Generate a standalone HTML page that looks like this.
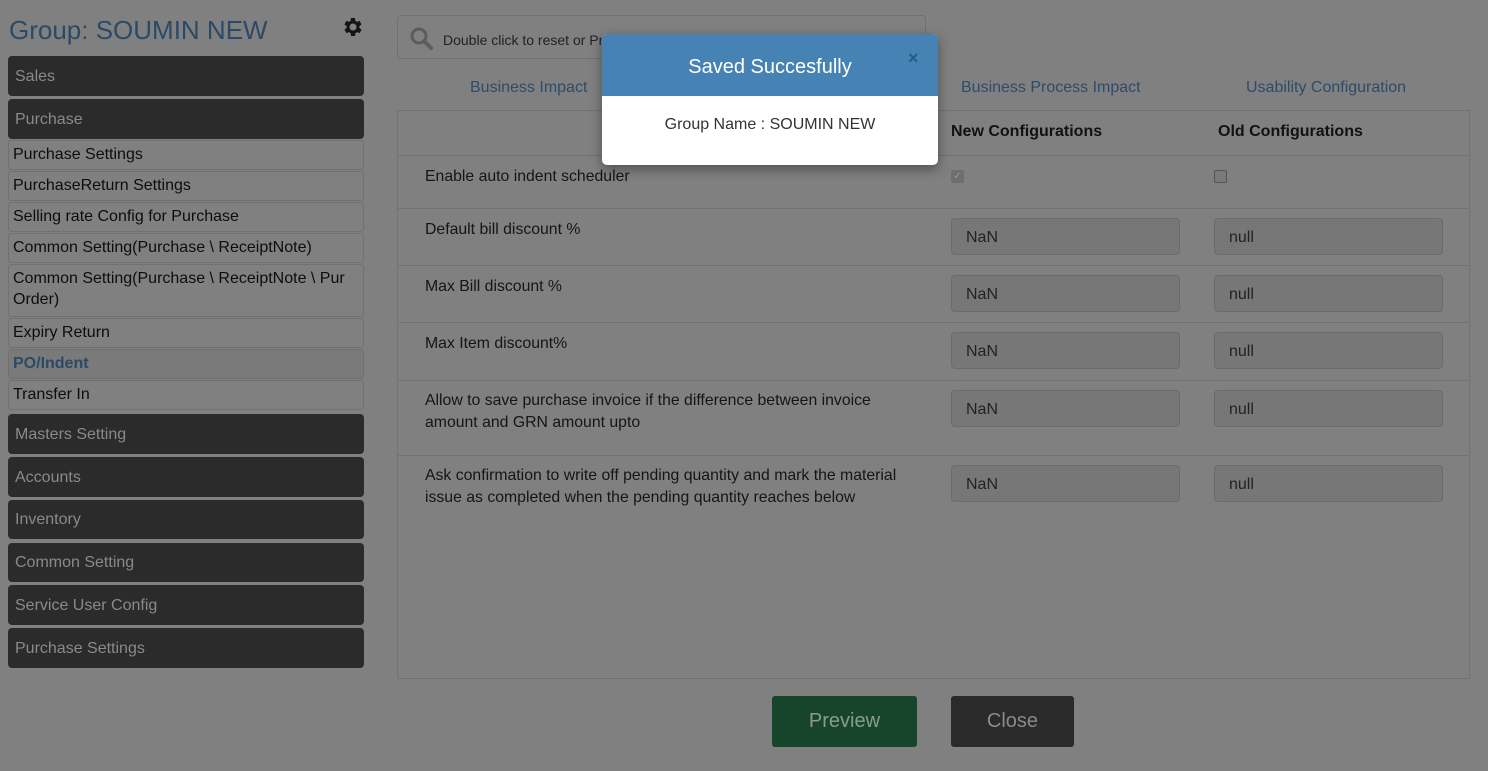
<!DOCTYPE html>
<html><head><meta charset="utf-8"><style>
*{box-sizing:border-box;margin:0;padding:0}
body{width:1488px;height:771px;background:#808080;font-family:"Liberation Sans",Arial,sans-serif;position:relative;overflow:hidden;color:#111}
.a{position:absolute}
.dk{position:absolute;left:8px;width:356px;background:#2b2b2b;border-radius:4px;color:#8a8a8a;font-size:16px;padding-left:7px;padding-top:1px;display:flex;align-items:center}
.sb{position:absolute;left:8px;width:356px;border:1px solid #717171;border-radius:3px;font-size:16px;padding-left:4px;color:#0d0d0d;line-height:21px;padding-top:3px}
.tab{position:absolute;top:79px;font-size:16px;color:#2c4c69}
.lbl{position:absolute;left:425px;font-size:15.8px;color:#151515;line-height:22px}
.in{position:absolute;height:37px;width:229px;background:#777;border:1px solid #6b6b6b;border-radius:4px;font-size:16px;color:#222;padding:10px 14px}
.hr{position:absolute;left:398px;width:1070px;height:1px;background:#727272}
</style></head><body>
<div class="a" style="left:9px;top:15px;font-size:26px;color:#2a4a68">Group: SOUMIN NEW</div>
<svg class="a" style="left:341px;top:15px" width="24" height="24" viewBox="0 0 24 24"><path fill="#151515" d="M19.4 13a7.5 7.5 0 0 0 0-2l2.1-1.6-2-3.5-2.5 1a7.6 7.6 0 0 0-1.7-1L15 3h-4l-.4 2.9a7.6 7.6 0 0 0-1.7 1l-2.5-1-2 3.5L6.6 11a7.5 7.5 0 0 0 0 2l-2.1 1.6 2 3.5 2.5-1a7.6 7.6 0 0 0 1.700 1L11 21h4l.4-2.9a7.6 7.6 0 0 0 1.7-1l2.5 1 2-3.5zM13 15.5a3.5 3.5 0 1 1 0-7 3.5 3.5 0 0 1 0 7z" transform="translate(-1 0)"/></svg>
<div class="dk" style="top:56px;height:40px">Sales</div>
<div class="dk" style="top:99px;height:40px">Purchase</div>
<div class="sb" style="top:140px;height:30px">Purchase Settings</div>
<div class="sb" style="top:171px;height:30px">PurchaseReturn Settings</div>
<div class="sb" style="top:202px;height:30px">Selling rate Config for Purchase</div>
<div class="sb" style="top:233px;height:30px">Common Setting(Purchase \ ReceiptNote)</div>
<div class="sb" style="top:264px;height:53px">Common Setting(Purchase \ ReceiptNote \ Pur Order)</div>
<div class="sb" style="top:318px;height:30px">Expiry Return</div>
<div class="sb" style="top:349px;height:30px;background:#7a7a7a;color:#2a4a68;font-weight:bold">PO/Indent</div>
<div class="sb" style="top:380px;height:30px">Transfer In</div>
<div class="dk" style="top:414px;height:40px">Masters Setting</div>
<div class="dk" style="top:457px;height:40px">Accounts</div>
<div class="dk" style="top:500px;height:39px">Inventory</div>
<div class="dk" style="top:543px;height:39px">Common Setting</div>
<div class="dk" style="top:585px;height:40px">Service User Config</div>
<div class="dk" style="top:628px;height:40px">Purchase Settings</div>

<div class="a" style="left:397px;top:15px;width:529px;height:44px;border:1px solid #717171;border-radius:4px"></div>
<svg class="a" style="left:409px;top:26px" width="26" height="26" viewBox="0 0 26 26"><circle cx="10" cy="10" r="7" fill="none" stroke="#5c5c5c" stroke-width="3"/><path d="M15 15l7 7" stroke="#5c5c5c" stroke-width="4" stroke-linecap="round"/></svg>
<div class="a" style="left:443px;top:32px;font-size:14px;color:#222">Double click to reset or Press</div>
<div class="tab" style="left:470px">Business Impact</div>
<div class="tab" style="left:961px">Business Process Impact</div>
<div class="tab" style="left:1246px">Usability Configuration</div>
<div class="a" style="left:397px;top:110px;width:1073px;height:569px;border:1px solid #727272;border-radius:2px"></div>
<div class="a" style="left:951px;top:123px;font-size:16px;font-weight:bold;color:#111">New Configurations</div>
<div class="a" style="left:1218px;top:123px;font-size:16px;font-weight:bold;color:#111">Old Configurations</div>
<div class="hr" style="top:155px"></div>
<div class="lbl" style="top:166px">Enable auto indent scheduler</div>
<div class="a" style="left:951px;top:170px;width:13px;height:13px;background:#6e6e6e;border-radius:2px;color:#999;font-size:10px;text-align:center;line-height:13px">✓</div>
<div class="a" style="left:1214px;top:170px;width:13px;height:13px;border:1px solid #555;border-radius:2px;background:#7a7a7a"></div>
<div class="hr" style="top:208px"></div>
<div class="lbl" style="top:219px">Default bill discount %</div>
<div class="in" style="left:951px;top:218px">NaN</div><div class="in" style="left:1214px;top:218px">null</div>
<div class="hr" style="top:265px"></div>
<div class="lbl" style="top:276px">Max Bill discount %</div>
<div class="in" style="left:951px;top:275px">NaN</div><div class="in" style="left:1214px;top:275px">null</div>
<div class="hr" style="top:322px"></div>
<div class="lbl" style="top:333px">Max Item discount%</div>
<div class="in" style="left:951px;top:332px">NaN</div><div class="in" style="left:1214px;top:332px">null</div>
<div class="hr" style="top:380px"></div>
<div class="lbl" style="top:390px">Allow to save purchase invoice if the difference between invoice<br>amount and GRN amount upto</div>
<div class="in" style="left:951px;top:390px">NaN</div><div class="in" style="left:1214px;top:390px">null</div>
<div class="hr" style="top:455px"></div>
<div class="lbl" style="top:465px">Ask confirmation to write off pending quantity and mark the material<br>issue as completed when the pending quantity reaches below</div>
<div class="in" style="left:951px;top:465px">NaN</div><div class="in" style="left:1214px;top:465px">null</div>

<div class="a" style="left:772px;top:696px;width:145px;height:51px;background:#17452b;border-radius:3px;color:#8a9a90;font-size:20px;text-align:center;line-height:51px">Preview</div>
<div class="a" style="left:951px;top:696px;width:123px;height:51px;background:#2a2a2a;border-radius:3px;color:#8a8a8a;font-size:20px;text-align:center;line-height:51px">Close</div>

<div class="a" style="left:602px;top:34px;width:336px;height:131px;background:#fff;border-radius:5px;overflow:hidden;box-shadow:0 4px 12px rgba(0,0,0,.4)">
<div style="height:62px;background:#4682b4;color:#fff;font-size:20px;text-align:center;line-height:62px;padding-top:2px">Saved Succesfully</div>
<div class="a" style="left:306px;top:14px;color:#2a5a84;font-size:18px;font-weight:bold">×</div>
<div style="text-align:center;font-size:16px;color:#333;margin-top:20px">Group Name : SOUMIN NEW</div>
</div>
</body></html>
